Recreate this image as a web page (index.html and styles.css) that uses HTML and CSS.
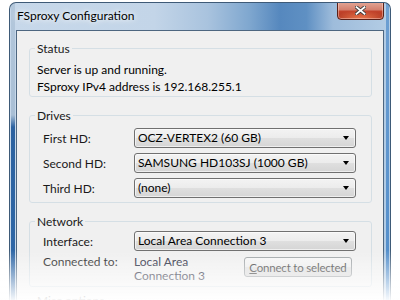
FILE: index.html
```html
<!DOCTYPE html>
<html lang="en">
<head>
    <meta charset="UTF-8">
    <title>FSproxy Configuration</title>
    <link rel="stylesheet" href="styles.css">
</head>
<body>
    <div class="window">
        <div class="titlebar">
            <span class="title">FSproxy Configuration</span>
            <div class="close">
                <svg width="11" height="9" viewBox="0 0 11 9">
                    <path d="M1.5 1.2 L9.5 7.8 M9.5 1.2 L1.5 7.8" stroke="#3a3a3a" stroke-width="3.6" stroke-linecap="square"/>
                    <path d="M1.5 1.2 L9.5 7.8 M9.5 1.2 L1.5 7.8" stroke="#ffffff" stroke-width="1.8" stroke-linecap="square"/>
                </svg>
            </div>
        </div>

        <div class="client">
            <fieldset class="group status">
                <legend>Status</legend>
                <p>Server is up and running.</p>
                <p>FSproxy IPv4 address is 192.168.255.1</p>
            </fieldset>

            <fieldset class="group drives">
                <legend>Drives</legend>
                <div class="rows">
                    <div class="row">
                        <span class="label">First HD:</span>
                        <div class="combo"><span>OCZ-VERTEX2 (60 GB)</span><i class="arrow"></i></div>
                    </div>
                    <div class="row">
                        <span class="label">Second HD:</span>
                        <div class="combo"><span>SAMSUNG HD103SJ (1000 GB)</span><i class="arrow"></i></div>
                    </div>
                    <div class="row">
                        <span class="label">Third HD:</span>
                        <div class="combo"><span>(none)</span><i class="arrow"></i></div>
                    </div>
                </div>
            </fieldset>

            <fieldset class="group network">
                <legend>Network</legend>
                <div class="rows">
                    <div class="row">
                        <span class="label">Interface:</span>
                        <div class="combo"><span>Local Area Connection 3</span><i class="arrow"></i></div>
                    </div>
                    <div class="row connected">
                        <span class="label">Connected to:</span>
                        <span class="conn-name">Local Area<br>Connection 3</span>
                        <button class="btn"><u>C</u>onnect to selected</button>
                    </div>
                </div>
            </fieldset>

            <fieldset class="group misc">
                <legend>Misc options</legend>
            </fieldset>
        </div>
    </div>

    <div class="fade"></div>
</body>
</html>
```

FILE: styles.css
```css
* {
    box-sizing: border-box;
}

body {
    margin: 0;
    height: 300px;
    overflow: hidden;
    background: #fff;
    font-family: Lato, "Liberation Sans", sans-serif;
    font-size: 12px;
    color: #000;
}

/* window frame */
.window {
    width: 382px;
    height: 298px;
    margin: 2px 0 0 9px;
    padding: 0 6px;
    border: 1px solid #3e5a77;
    border-bottom: none;
    border-radius: 7px 7px 0 0;
    overflow: hidden;
    background:
        linear-gradient(to bottom, #b4c8dc 0, #a9bfd5 112px, #2c62a0 124px, #2f68a8 100%) left 1px top 0 / 4px 100% no-repeat,
        linear-gradient(to bottom, #6d9fd2, #4f8cca) right 1px top 0 / 3px 100% no-repeat,
        linear-gradient(to right, #c7d8ea 0%, #c3d5e8 38%, #a9c3de 52%, #7fa7cf 63%, #5688be 71%, #5f90c3 78%, #9ebcdb 85%, #b4cde5 100%);
}

.titlebar {
    height: 27px;
    display: flex;
    justify-content: space-between;
    align-items: flex-start;
}

.title {
    margin: 5px 0 0 1px;
    font-size: 12px;
    line-height: 15px;
    color: #000;
    text-shadow: 0 0 5px rgba(255, 255, 255, 0.9), 0 0 9px rgba(255, 255, 255, 0.8);
}

.close {
    width: 47px;
    height: 19px;
    margin-top: -2px;
    border: 1px solid #5b2118;
    border-radius: 0 0 4px 4px;
    display: flex;
    align-items: center;
    justify-content: center;
    background:
        radial-gradient(ellipse 60% 50% at 50% 100%, rgba(255, 140, 90, 0.8), rgba(255, 140, 90, 0) 100%),
        linear-gradient(to bottom, #e3a797 0%, #d4806e 45%, #c2432b 55%, #a8301c 100%);
    box-shadow: inset 0 0 0 1px rgba(255, 220, 210, 0.45);
}

.close svg {
    display: block;
}

/* client area */
.client {
    height: 271px;
    padding: 10px 11px 0 12px;
    background: #f0f0f0;
    border: 1px solid #4d6680;
    border-bottom: none;
}

.group {
    margin: 0;
    min-width: 0;
    padding: 5px 15px 1px 5px;
    border: 1px solid #d5dfe5;
    border-radius: 3px;
}

.group + .group {
    margin-top: 11px;
}

legend {
    padding: 0 2px;
    line-height: 15px;
    color: #1a1a1a;
}

.status p {
    margin: 0;
    padding-left: 2px;
    line-height: 17px;
}

.drives {
    padding-bottom: 4px;
}

.network {
    padding-top: 2px;
    padding-bottom: 3px;
}

.rows {
    display: flex;
    flex-direction: column;
    gap: 5px;
}

.network .rows {
    gap: 4px;
}

.row {
    display: flex;
    align-items: center;
    height: 20px;
    padding-left: 8px;
}

.label {
    flex: none;
    width: 91px;
    color: #1a1a1a;
}

.combo {
    flex: 1;
    height: 20px;
    padding: 0 6px 0 3px;
    display: flex;
    align-items: center;
    justify-content: space-between;
    line-height: 18px;
    border: 1px solid #707070;
    border-radius: 3px;
    background: linear-gradient(to bottom, #f3f3f3 0%, #ececec 48%, #dfdfdf 52%, #d5d5d5 100%);
    box-shadow: inset 0 0 0 1px rgba(255, 255, 255, 0.6);
}

.arrow {
    width: 0;
    height: 0;
    border-left: 3.5px solid transparent;
    border-right: 3.5px solid transparent;
    border-top: 4px solid #000;
}

.row.connected {
    height: auto;
    align-items: flex-start;
}

.connected .label,
.conn-name {
    line-height: 14px;
}

.conn-name {
    width: 109px;
    color: #1c2438;
}

.btn {
    width: 108px;
    height: 20px;
    margin: 2px 4px 0 auto;
    padding: 0;
    font-family: inherit;
    font-size: 11.5px;
    letter-spacing: -0.2px;
    color: #3c3c3c;
    border: 1px solid #9ea3a6;
    border-radius: 3px;
    background: linear-gradient(to bottom, #f6f6f6, #ececec 50%, #e2e2e2 51%, #dadada);
}

.misc {
    margin-top: 6px !important;
    height: 20px;
}

/* bottom fade of the screenshot */
.fade {
    position: fixed;
    left: 0;
    top: 250px;
    width: 400px;
    height: 50px;
    pointer-events: none;
    background: linear-gradient(to bottom, rgba(255, 255, 255, 0), rgba(255, 255, 255, 0.95));
}
```
